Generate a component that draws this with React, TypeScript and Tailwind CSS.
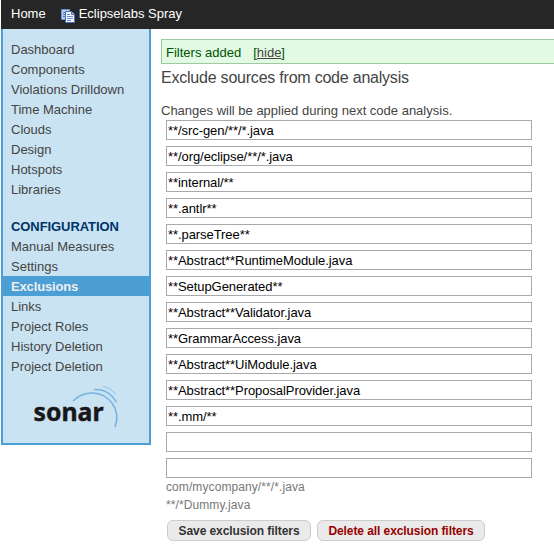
const navItems = ['Dashboard', 'Components', 'Violations Drilldown', 'Time Machine', 'Clouds', 'Design', 'Hotspots', 'Libraries'];
const configItems = ['Manual Measures', 'Settings', 'Exclusions', 'Links', 'Project Roles', 'History Deletion', 'Project Deletion'];
const patterns = [
  '**/src-gen/**/*.java',
  '**/org/eclipse/**/*.java',
  '**internal/**',
  '**.antlr**',
  '**.parseTree**',
  '**Abstract**RuntimeModule.java',
  '**SetupGenerated**',
  '**Abstract**Validator.java',
  '**GrammarAccess.java',
  '**Abstract**UiModule.java',
  '**Abstract**ProposalProvider.java',
  '**.mm/**',
  '',
  '',
];

function ProjectIcon() {
  return (
    <svg width="14" height="14" viewBox="0 0 14 14" className="block shrink-0">
      <path d="M.5.5h8v10h-8z" fill="#b9d0f2" stroke="#6b8fca" />
      <path d="M2 3.5h2M2 5.500h2M2 7.5h2" stroke="#4f77bd" />
      <path d="M4.500 2.500h6l3 3v8h-9z" fill="#f4f7ff" stroke="#4a70b4" />
      <path d="M10.500 2.500v3h3" fill="#a9c4ee" stroke="#4a70b4" />
      <path d="M6 5.500h3M6 7.500h6M6 9.500h6M6 11.500h4" stroke="#6d91ce" />
    </svg>
  );
}

function SonarLogo() {
  return (
    <svg width="90" height="48" viewBox="0 0 90 48" className="ml-[29px] mt-[9px] block">
      <text x="1.5" y="35.500" fontSize="25.5" fontWeight="700" textLength="70" lengthAdjust="spacingAndGlyphs" fill="#191619" stroke="#191619" strokeWidth="0.4" className="font-['Noto_Sans',sans-serif]">sonar</text>
      <path d="M41 16C53 4 71 6 80 18C86 26 86 34 83 42" fill="none" stroke="#74b4e3" strokeWidth="1.5" />
      <path d="M62 4.500C72 4 80 9 84.500 17.500" fill="none" stroke="#74b4e3" strokeWidth="1.4" />
      <path d="M71 1Q79 3 84 9" fill="none" stroke="#8dc2e8" />
    </svg>
  );
}

function NavItem({ label }: { label: string }) {
  const active = label === 'Exclusions';
  return (
    <li className={active ? 'h-5 bg-[#4b9fd5] pl-2 pt-px font-bold tracking-[-0.15px] text-[#eee]' : 'h-5 pl-2 pt-px'}>{label}</li>
  );
}

export default function App() {
  return (
    <div className="h-[550px] w-[554px] overflow-hidden bg-white pl-px font-['Liberation_Sans',Arial,sans-serif] text-[13px] leading-5 text-[#444]">
      <header className="flex h-[29px] items-center bg-[#262626] pl-2.5 text-white">
        <span className="-mt-px">Home</span>
        <span className="ml-[15px] mt-[3px]"><ProjectIcon /></span>
        <span className="-mt-px ml-1">Eclipselabs Spray</span>
      </header>
      <div className="flex items-start">
        <aside className="h-[416px] w-[150px] shrink-0 border-2 border-t-0 border-[#4b9fd5] bg-[#cae3f2] pt-2.5">
          <ul>{navItems.map((item) => <NavItem key={item} label={item} />)}</ul>
          <h3 className="mt-[17px] h-5 pl-2 pt-px font-bold tracking-[-0.08px] text-[#003366]">CONFIGURATION</h3>
          <ul>{configItems.map((item) => <NavItem key={item} label={item} />)}</ul>
          <SonarLogo />
        </aside>
        <main className="min-w-0 flex-1 pl-2.5 pt-2.5">
          <div className="flex h-[25px] items-center border border-r-0 border-[#9fc99f] bg-[#e2f9e3] pl-1 pt-[3px] text-[#050]">
            <span>Filters added</span>
            <span className="ml-3">[<a className="text-[#444] underline">hide</a>]</span>
          </div>
          <h1 className="mt-1 text-base leading-5 tracking-[-0.22px]">Exclude sources from code analysis</h1>
          <p className="mt-[13px] h-[19px] whitespace-nowrap">Changes will be applied during next code analysis.</p>
          <form className="pl-[5px]">
            <div className="flex flex-col gap-1.5">
              {patterns.map((pattern, i) => (
                <input key={i} defaultValue={pattern} className="block h-5 w-[366px] rounded-none border border-[#a9a9ad] bg-white px-px pt-0.5 text-[13px] tracking-[-0.07px] text-black outline-none" />
              ))}
            </div>
            <p className="text-xs leading-[18px] tracking-[0.09px] text-[#777]">com/mycompany/**/*.java<br />**/*Dummy.java</p>
            <div className="ml-px mt-1.5 flex gap-1.5 text-xs font-bold">
              <button type="button" className="h-[21px] w-[144px] whitespace-nowrap rounded-md border border-[#ccc] bg-[#eaeaea] pt-px leading-[18px] tracking-[-0.08px] text-[#333]">Save exclusion filters</button>
              <button type="button" className="h-[21px] w-[168px] whitespace-nowrap rounded-md border border-[#ccc] bg-[#eaeaea] pt-px leading-[18px] tracking-[-0.08px] text-[#900]">Delete all exclusion filters</button>
            </div>
          </form>
        </main>
      </div>
    </div>
  );
}
